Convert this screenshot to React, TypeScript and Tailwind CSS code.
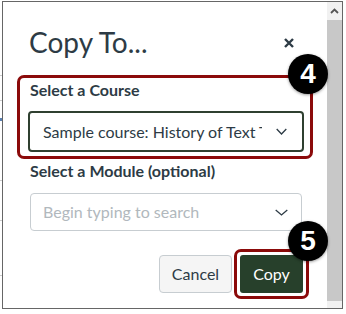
import React from "react";

const Chevron = ({ w }: { w: number }) => (
  <svg width={w} height="7" viewBox={`0 0 ${w} 7`} fill="none">
    <path d={`M0.7 1 L${w / 2} 6 L${w - 0.7} 1`} stroke="#2d3b45" strokeWidth="1.3" />
  </svg>
);

const Badge = ({ n, className }: { n: string; className: string }) => (
  <div
    className={`absolute w-[40px] h-[40px] rounded-full bg-black text-white flex items-center justify-center text-[28px] font-bold leading-none shadow-[0_1px_3px_rgba(0,0,0,0.4)] ${className}`}
    style={{ fontFamily: "Arial, 'Liberation Sans', sans-serif" }}
  >
    {n}
  </div>
);

export default function App() {
  return (
    <div
      className="relative w-[346px] h-[314px] bg-white overflow-hidden"
      style={{ fontFamily: "Lato, 'Liberation Sans', sans-serif" }}
    >
      <div className="absolute left-0 top-[75px] w-[2px] h-[1px] bg-[#ccc]" />
      <div className="absolute left-0 top-[100px] w-[2px] h-[1px] bg-[#ccc]" />
      <div className="absolute left-0 top-[118px] w-[2px] h-[3px] bg-[#5a7fb0]" />
      <div className="absolute left-0 top-[180px] w-[2px] h-[1px] bg-[#ccc]" />
      <div className="absolute left-0 top-[220px] w-[2px] h-[1px] bg-[#ccc]" />
      <div className="absolute left-0 top-[275px] w-[2px] h-[1px] bg-[#ccc]" />
      <div className="ml-[2px] mt-[1px] w-[341px] h-[308px] border border-[#666] flex bg-white">
        <div className="flex-1 flex flex-col">
          <div className="h-[73px] flex justify-between items-start pl-[26px] pr-[33px] pt-[26px]">
            <span className="text-[28px] text-[#2d3b45] leading-none">Copy To...</span>
            <svg width="10" height="10" viewBox="0 0 10 10" className="mt-[10px]">
              <path d="M1 1 L9 9 M9 1 L1 9" stroke="#2d3b45" strokeWidth="2.4" />
            </svg>
          </div>
          <div className="ml-[14px] w-[296px] border-[3px] border-[#8b0a0a] rounded-[7px] pl-[8px] pr-[6px] pt-[2px] pb-[4px]">
            <div className="text-[16px] font-bold text-[#2d3b45] leading-[20px] pl-[2px]">Select a Course</div>
            <div className="mt-[11px] h-[41px] border-2 border-[#2f4030] rounded-[4px] flex items-center pl-[13px] pr-[15px]">
              <span className="w-[219px] text-[16px] text-[#2d3b45] whitespace-nowrap overflow-hidden">
                Sample course: History of Text Tools
              </span>
              <span className="flex-1" />
              <Chevron w={11} />
            </div>
          </div>
          <div className="ml-[27px] mt-[2px] text-[16px] font-bold text-[#2d3b45] leading-[20px]">
            Select a Module (optional)
          </div>
          <div className="ml-[27px] mt-[12px] w-[272px] h-[38px] border border-[#c7cdd1] rounded-[4px] flex items-center pl-[12px] pr-[13px]">
            <span className="flex-1 text-[16px] text-[#b1b8bd]">Begin typing to search</span>
            <Chevron w={13} />
          </div>
          <div className="flex justify-end items-center gap-[2px] pr-[18px] mt-[18px]">
            <div className="w-[73px] h-[38px] bg-[#f5f5f5] border border-[#c7cdd1] rounded-[4px] flex items-center justify-center text-[16px] text-[#2d3b45]">
              Cancel
            </div>
            <div className="w-[75px] h-[50px] border-[3px] border-[#8b0a0a] rounded-[7px] p-[3px]">
              <div className="w-full h-full bg-[#27402b] rounded-[3px] flex items-center justify-center text-[16px] text-white">
                Copy
              </div>
            </div>
          </div>
        </div>
        <div className="w-[15px] flex flex-col">
          <div className="h-[18px] bg-[#f1f1f1] flex items-center justify-center">
            <svg width="9" height="6" viewBox="0 0 9 6">
              <path d="M1 5 L4.5 1.5 L8 5" stroke="#555" strokeWidth="1.8" fill="none" />
            </svg>
          </div>
          <div className="flex-1 bg-[#c8c8c8]" />
          <div className="h-[7px] bg-[#f1f1f1]" />
        </div>
      </div>
      <Badge n="4" className="left-[288px] top-[54px]" />
      <Badge n="5" className="left-[288px] top-[221px]" />
    </div>
  );
}
